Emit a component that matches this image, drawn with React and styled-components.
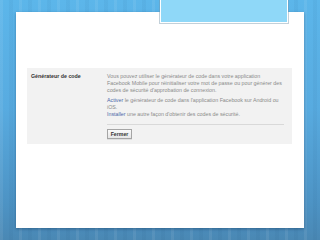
import React from 'react'
import styled, { createGlobalStyle } from 'styled-components'

const GlobalStyle = createGlobalStyle`
  html, body {
    margin: 0;
    padding: 0;
  }
  body {
    font-family: "Liberation Sans", Arial, sans-serif;
  }
`

const Slide = styled.div`
  position: relative;
  width: 320px;
  height: 240px;
  overflow: hidden;
  box-sizing: border-box;
  padding: 12px 16px;
  background:
    repeating-linear-gradient(90deg,
      rgba(255, 255, 255, 0.07) 0px, rgba(255, 255, 255, 0.07) 3px,
      rgba(0, 0, 0, 0) 3px, rgba(0, 0, 0, 0) 9px,
      rgba(0, 40, 80, 0.04) 9px, rgba(0, 40, 80, 0.04) 13px,
      rgba(0, 0, 0, 0) 13px, rgba(0, 0, 0, 0) 19px),
    linear-gradient(180deg, #5cb6ea 0%, #58abe0 45%, #4d93c4 85%, #4a88b4 100%);
`

const Tab = styled.div`
  position: absolute;
  top: -2px;
  left: 160px;
  width: 126px;
  height: 23px;
  background: #8fd8f8;
  border: 1px solid #ffffff;
  box-shadow: 0 0 0 1px rgba(120, 150, 170, 0.45);
  z-index: 2;
`

const Card = styled.div`
  height: 216px;
  background: #ffffff;
  box-shadow: 0 1px 3px rgba(0, 30, 60, 0.35);
  padding: 56px 12px 0 11px;
  box-sizing: border-box;
`

const Panel = styled.div`
  display: grid;
  grid-template-columns: 76px 1fr;
  background: #f2f2f2;
  padding: 5px 6px 5px 4px;
  width: 265px;
  box-sizing: border-box;
`

const Label = styled.div`
  font-size: 5.3px;
  font-weight: bold;
  color: #333333;
  line-height: 6.8px;
`

const Body = styled.div`
  display: flex;
  flex-direction: column;
`

const Para = styled.p`
  margin: 0 0 4px;
  font-size: 5.3px;
  line-height: 6.8px;
  color: #8a8a8a;
  white-space: nowrap;
`

const Link = styled.span`
  color: #4a67a8;
`

const Divider = styled.div`
  height: 1px;
  background: #d9d9d9;
  margin: 2px 0 4px;
  width: 177px;
`

const Button = styled.button`
  align-self: flex-start;
  width: 25px;
  height: 10px;
  padding: 0;
  font-family: "Liberation Sans", Arial, sans-serif;
  font-size: 5.2px;
  font-weight: bold;
  color: #333333;
  background: linear-gradient(180deg, #fafafa, #e6e6e6);
  border: 1px solid #a5a5a5;
  box-shadow: 0 1px 0 rgba(0, 0, 0, 0.08);
`

export default function App() {
  return (
    <>
      <GlobalStyle />
      <Slide>
        <Tab />
        <Card>
          <Panel>
            <Label>Générateur de code</Label>
            <Body>
              <Para>
                Vous pouvez utiliser le générateur de code dans votre application<br />
                Facebook Mobile pour réinitialiser votre mot de passe ou pour générer des<br />
                codes de sécurité d'approbation de connexion.
              </Para>
              <Para>
                <Link>Activer</Link> le générateur de code dans l'application Facebook sur Android ou<br />
                iOS.<br />
                <Link>Installer</Link> une autre façon d'obtenir des codes de sécurité.
              </Para>
              <Divider />
              <Button>Fermer</Button>
            </Body>
          </Panel>
        </Card>
      </Slide>
    </>
  )
}
